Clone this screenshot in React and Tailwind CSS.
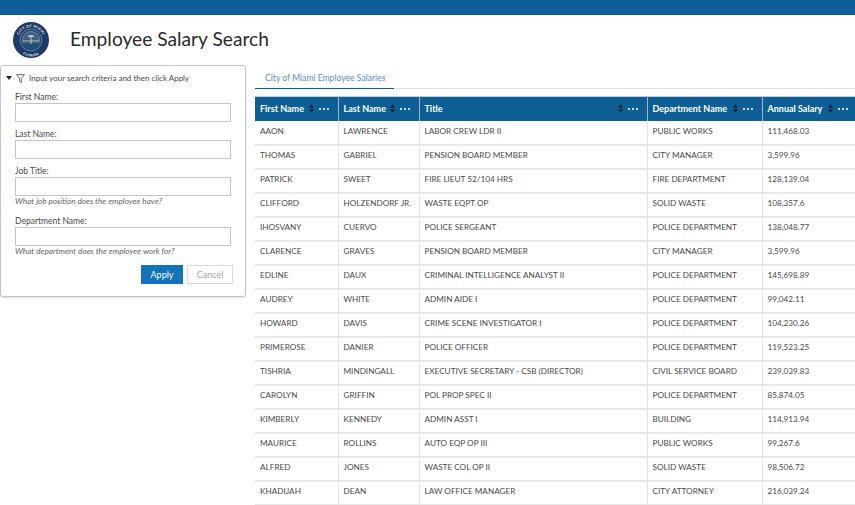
const rows = [
  ["AAON", "LAWRENCE", "LABOR CREW LDR II", "PUBLIC WORKS", "111,468.03"],
  ["THOMAS", "GABRIEL", "PENSION BOARD MEMBER", "CITY MANAGER", "3,599.96"],
  ["PATRICK", "SWEET", "FIRE LIEUT 52/104 HRS", "FIRE DEPARTMENT", "128,139.04"],
  ["CLIFFORD", "HOLZENDORF JR.", "WASTE EQPT OP", "SOLID WASTE", "108,357.6"],
  ["IHOSVANY", "CUERVO", "POLICE SERGEANT", "POLICE DEPARTMENT", "138,048.77"],
  ["CLARENCE", "GRAVES", "PENSION BOARD MEMBER", "CITY MANAGER", "3,599.96"],
  ["EDLINE", "DAUX", "CRIMINAL INTELLIGENCE ANALYST II", "POLICE DEPARTMENT", "145,698.89"],
  ["AUDREY", "WHITE", "ADMIN AIDE I", "POLICE DEPARTMENT", "99,042.11"],
  ["HOWARD", "DAVIS", "CRIME SCENE INVESTIGATOR I", "POLICE DEPARTMENT", "104,230.26"],
  ["PRIMEROSE", "DANIER", "POLICE OFFICER", "POLICE DEPARTMENT", "119,523.25"],
  ["TISHRIA", "MINDINGALL", "EXECUTIVE SECRETARY - CSB (DIRECTOR)", "CIVIL SERVICE BOARD", "239,039.83"],
  ["CAROLYN", "GRIFFIN", "POL PROP SPEC II", "POLICE DEPARTMENT", "85,874.05"],
  ["KIMBERLY", "KENNEDY", "ADMIN ASST I", "BUILDING", "114,913.94"],
  ["MAURICE", "ROLLINS", "AUTO EQP OP III", "PUBLIC WORKS", "99,267.6"],
  ["ALFRED", "JONES", "WASTE COL OP II", "SOLID WASTE", "98,506.72"],
  ["KHADIJAH", "DEAN", "LAW OFFICE MANAGER", "CITY ATTORNEY", "216,039.24"],
];

const columns = [
  { label: "First Name", width: "w-[83px]" },
  { label: "Last Name", width: "w-[81px]" },
  { label: "Title", width: "w-[228px]" },
  { label: "Department Name", width: "w-[115px]" },
  { label: "Annual Salary", width: "w-[95px]" },
];

function Seal() {
  return (
    <svg viewBox="0 0 36 36" className="w-9 h-9 shrink-0">
      <defs>
        <path id="sealTop" d="M5.2 18a12.8 12.8 0 0 1 25.6 0" />
        <path id="sealBottom" d="M3.500 20a14.500 14.500 0 0 0 29 0" />
      </defs>
      <circle cx="18" cy="18" r="18" fill="#1d3a68" />
      <circle cx="18" cy="18" r="11" fill="#24477a" stroke="#8fa3bd" strokeWidth="0.6" />
      <circle cx="18" cy="18" r="8.500" fill="#3c5f86" stroke="#c9b98a" strokeWidth="0.5" />
      <path d="M9.600 20h16.800a8.500 8.500 0 0 1-16.800 0z" fill="#1e4f7d" />
      <path d="M10 18.500h16M9.800 20h16.400" stroke="#d6c590" strokeWidth="0.5" />
      <path d="M18 22v-7" stroke="#e8e2cc" strokeWidth="0.8" />
      <path d="M14.500 14.500c1.500-1.600 5.500-1.600 7 0-1.500.5-5.500.5-7 0z" fill="#dfe5e8" />
      <text fontSize="3.600" fontWeight="700" fill="#e6ebf2" fontFamily="Lato, sans-serif" letterSpacing="0.3">
        <textPath href="#sealTop" startOffset="50%" textAnchor="middle">CITY OF MIAMI</textPath>
      </text>
      <text fontSize="3.400" fontWeight="700" fill="#e6ebf2" fontFamily="Lato, sans-serif" letterSpacing="0.4">
        <textPath href="#sealBottom" startOffset="50%" textAnchor="middle">FLORIDA</textPath>
      </text>
    </svg>
  );
}

function FunnelIcon() {
  return (
    <svg viewBox="0 0 9 9" className="w-[9px] h-[9px] ml-[4px] shrink-0" fill="none" stroke="#444444" strokeWidth="0.8">
      <path d="M0.500 0.600h8L5.400 4.400v4L3.600 7.400v-3z" />
    </svg>
  );
}

function SortIcon() {
  return (
    <svg viewBox="0 0 6 10" className="w-[5px] h-[9px] shrink-0" fill="#0b1f33">
      <path d="M3 0l3 4H0zM3 10L0 6h6z" />
    </svg>
  );
}

function Dots() {
  return (
    <svg viewBox="0 0 10 2" className="w-[10px] h-[2px] shrink-0" fill="#ffffff">
      <rect width="2" height="2" rx="1" />
      <rect x="4" width="2" height="2" rx="1" />
      <rect x="8" width="2" height="2" rx="1" />
    </svg>
  );
}

function Field({ label, hint }) {
  return (
    <div className="mb-[5px]">
      <label className="block pt-[1px] text-[8.5px] leading-[12px] text-[#4a4a4a]">{label}</label>
      <input className="block w-[216px] h-[19px] border border-[#c4c4c4] bg-white outline-none" />
      {hint && <p className="text-[8.2px] leading-[11px] mb-[7px] italic text-[#666666]">{hint}</p>}
    </div>
  );
}

export default function App() {
  return (
    <div className="h-screen overflow-hidden bg-white font-['Lato',sans-serif]">
      <div className="h-[15px] bg-[#0f5f97] border-b border-[#0c5688]" />

      <header className="h-[50px] flex items-center pl-[13px]">
        <Seal />
        <h1 className="ml-[21px] -mt-[2px] text-[19.2px] font-normal text-[#2b2b2b]">Employee Salary Search</h1>
      </header>

      <div className="flex items-start">
        <aside className="w-[246px] shrink-0 h-[232px] bg-white border border-[#c4c4c4] rounded-[3px] shadow-[0_1px_2px_rgba(0,0,0,0.12)] pl-[14px] pr-[14px]">
          <div className="flex items-center h-[24px] -ml-[9px]">
            <span className="w-0 h-0 border-l-[3px] border-r-[3px] border-t-[4px] border-l-transparent border-r-transparent border-t-[#222222]" />
            <FunnelIcon />
            <span className="ml-[4px] text-[8px] text-[#4a4a4a]">Input your search criteria and then click Apply</span>
          </div>
          <Field label="First Name:" />
          <Field label="Last Name:" />
          <Field label="Job Title:" hint="What job position does the employee have?" />
          <Field label="Department Name:" hint="What department does the employee work for?" />
          <div className="flex justify-end gap-[4px] -mr-[2px] mt-[8px]">
            <button className="w-[42px] h-[19px] bg-[#1273bb] text-white text-[9px]">Apply</button>
            <button className="w-[46px] h-[19px] border border-[#dcdcdc] text-[#a8a8a8] text-[9px]">Cancel</button>
          </div>
        </aside>

        <main className="ml-[9px] flex-1 min-w-0">
          <div className="h-[24px] border-b border-[#e2e2e2] flex">
            <div className="w-[139px] h-[24px] border-b border-[#0f5f97] pl-[10px] text-[8.6px] leading-[27px] text-[#5a8fbb]">
              City of Miami Employee Salaries
            </div>
          </div>
          <table className="mt-[7px] table-fixed border-collapse w-[602px]">
            <thead>
              <tr className="bg-[#0f5f97] h-[24px] border-t border-[#c4ced6]">
                {columns.map((col) => (
                  <th key={col.label} className={`${col.width} p-0 border-r border-[#9fb8cc] last:border-r-0`}>
                    <div className="flex items-center pl-[5px] pr-[9px] text-[9px] font-bold text-white">
                      <span className="whitespace-nowrap">{col.label}</span>
                      <span className="ml-auto flex items-center gap-[5px]">
                        <SortIcon />
                        <Dots />
                      </span>
                    </div>
                  </th>
                ))}
              </tr>
            </thead>
            <tbody>
              {rows.map((row) => (
                <tr key={row[0]} className="h-[24px] border-b-2 border-[#e8e8e8]">
                  {row.map((cell, i) => (
                    <td key={i} className="p-0 pl-[5px] pb-[2px] text-[8.200px] text-[#4a4a4a] whitespace-nowrap border-r border-[#e2e2e2] last:border-r-0">
                      {cell}
                    </td>
                  ))}
                </tr>
              ))}
            </tbody>
          </table>
        </main>
      </div>
    </div>
  );
}
